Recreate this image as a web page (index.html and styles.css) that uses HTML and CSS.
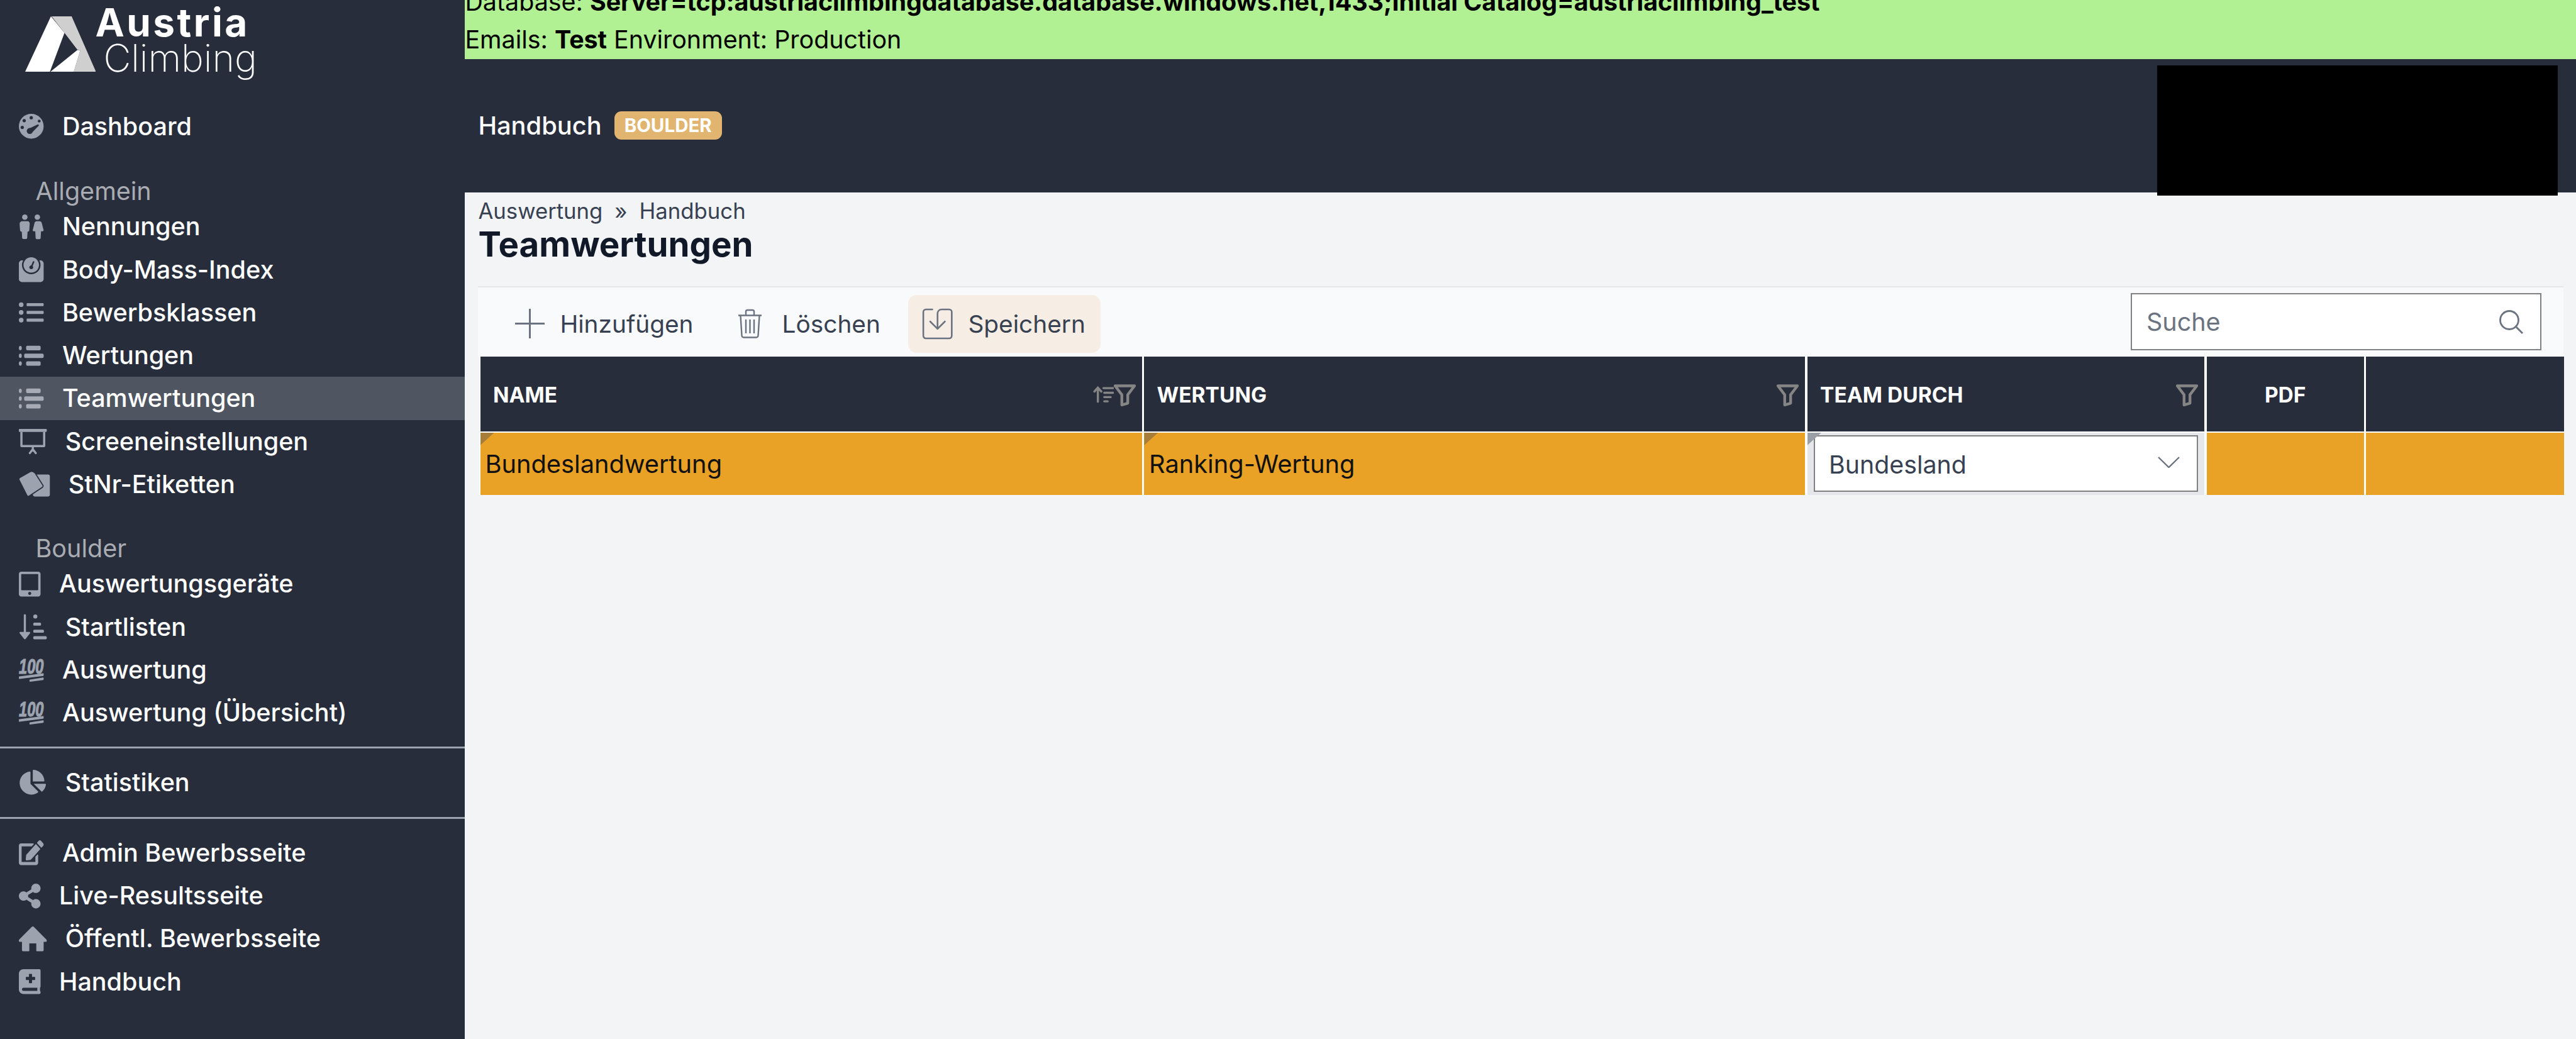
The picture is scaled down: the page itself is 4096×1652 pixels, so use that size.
FILE: index.html
```html
<!DOCTYPE html>
<html lang="de">
<head>
<meta charset="utf-8">
<title>Teamwertungen</title>
<link rel="stylesheet" href="styles.css">
</head>
<body>
<div class="app">
  <aside class="sidebar">
    <div class="logo">
      <svg class="logo-mark" viewBox="0 0 495 387" aria-hidden="true">
        <polygon fill="#cfcfcf" points="185,0 325,0 495,387 340,387 385,240 365,233 275,115"/>
        <polygon fill="#fff" points="0,387 180,0 193,15 275,115 173,387"/>
        <polygon fill="#fff" points="177,387 365,235 385,240 340,387"/>
      </svg>
      <div class="logo-text">
        <span class="logo-top">Austria</span>
        <span class="logo-bottom">Climbing</span>
      </div>
    </div>

    <a class="nav-item"><svg class="nav-icon w512" viewBox="0 0 512 512"><circle cx="256" cy="256" r="256"/><g class="cut"><circle cx="256" cy="80" r="34"/><circle cx="110" cy="140" r="34"/><circle cx="70" cy="280" r="34"/><circle cx="420" cy="150" r="30"/><circle cx="225" cy="355" r="62"/><polygon points="200,310 400,215 415,240 270,390"/></g></svg><span>Dashboard</span></a>

    <div class="nav-heading first">Allgemein</div>
    <a class="nav-item"><svg class="nav-icon w512" viewBox="0 0 512 512"><circle cx="123" cy="55" r="56"/><circle cx="382" cy="55" r="56"/><path d="M70 140h110c30 0 45 25 45 55l-10 130c-2 20-14 30-35 30l-8 130c-1 12-12 22-24 22h-56c-12 0-23-10-24-22l-8-130c-21 0-33-10-35-30L15 195c0-30 25-55 55-55z"/><path d="M335 140h95c22 0 36 14 42 32l38 150c3 14-6 26-22 26h-30l-8 140c-1 12-12 22-24 22h-55c-12 0-23-10-24-22l-8-140h-30c-16 0-25-12-22-26l38-150c6-18 20-32 42-32z"/></svg><span>Nennungen</span></a>
    <a class="nav-item"><svg class="nav-icon w512" viewBox="0 0 512 512"><path d="M448 64h-25.98C438.44 92.28 448 125.01 448 160c0 105.87-86.13 192-192 192S64 265.87 64 160c0-34.99 9.56-67.72 25.98-96H64C28.71 64 0 92.71 0 128v320c0 35.29 28.71 64 64 64h384c35.29 0 64-28.71 64-64V128c0-35.29-28.71-64-64-64zM256 320c88.37 0 160-71.63 160-160S344.37 0 256 0 96 71.63 96 160s71.63 160 160 160zm-.3-151.94l33.58-78.36c3.5-8.17 12.94-11.92 21.03-8.41 8.12 3.48 11.88 12.89 8.41 21l-33.67 78.55C291.73 188 296 197.45 296 208c0 22.09-17.91 40-40 40s-40-17.91-40-40c0-21.98 17.76-39.77 39.7-39.94z"/></svg><span>Body-Mass-Index</span></a>
    <a class="nav-item"><svg class="nav-icon w512" viewBox="0 0 512 512"><path d="M48 48a48 48 0 1 0 48 48 48 48 0 0 0-48-48zm0 160a48 48 0 1 0 48 48 48 48 0 0 0-48-48zm0 160a48 48 0 1 0 48 48 48 48 0 0 0-48-48zm448 16H176a16 16 0 0 0-16 16v32a16 16 0 0 0 16 16h320a16 16 0 0 0 16-16v-32a16 16 0 0 0-16-16zm0-320H176a16 16 0 0 0-16 16v32a16 16 0 0 0 16 16h320a16 16 0 0 0 16-16V80a16 16 0 0 0-16-16zm0 160H176a16 16 0 0 0-16 16v32a16 16 0 0 0 16 16h320a16 16 0 0 0 16-16v-32a16 16 0 0 0-16-16z"/></svg><span>Bewerbsklassen</span></a>
    <a class="nav-item"><svg class="nav-icon w512" viewBox="0 0 512 512"><ellipse cx="30" cy="96" rx="30" ry="44"/><ellipse cx="30" cy="256" rx="30" ry="44"/><ellipse cx="30" cy="416" rx="30" ry="44"/><rect x="150" y="50" width="300" height="92" rx="26"/><rect x="110" y="210" width="402" height="92" rx="26"/><rect x="150" y="370" width="300" height="92" rx="26"/></svg><span>Wertungen</span></a>
    <a class="nav-item active"><svg class="nav-icon w512" viewBox="0 0 512 512"><ellipse cx="30" cy="96" rx="30" ry="44"/><ellipse cx="30" cy="256" rx="30" ry="44"/><ellipse cx="30" cy="416" rx="30" ry="44"/><rect x="150" y="50" width="300" height="92" rx="26"/><rect x="110" y="210" width="402" height="92" rx="26"/><rect x="150" y="370" width="300" height="92" rx="26"/></svg><span>Teamwertungen</span></a>
    <a class="nav-item"><svg class="nav-icon w576" viewBox="0 0 576 512"><rect width="576" height="62" rx="12"/><path fill-rule="evenodd" d="M30 62h516v290c0 14-10 24-24 24H54c-14 0-24-10-24-24zM76 62v268h424V62z"/><path class="stroke-leg" d="M288 376v50M288 420l-62 80M288 420l62 80"/></svg><span>Screeneinstellungen</span></a>
    <a class="nav-item"><svg class="nav-icon w640" viewBox="0 0 640 512"><rect x="290" y="60" width="350" height="452" rx="36"/><path class="card-front" d="M232 0L20 120c-16 10-24 28-18 46L165 490c10 20 30 26 48 14l270-178c16-12 20-30 14-46L360 66c-20-48-80-90-128-66z"/></svg><span>StNr-Etiketten</span></a>

    <div class="nav-heading second">Boulder</div>
    <a class="nav-item"><svg class="nav-icon w448" viewBox="0 0 448 512"><path d="M400 0H48C21.5 0 0 21.5 0 48v416c0 26.5 21.5 48 48 48h352c26.5 0 48-21.5 48-48V48c0-26.5-21.5-48-48-48zM224 480c-17.7 0-32-14.3-32-32s14.3-32 32-32 32 14.3 32 32-14.3 32-32 32zm176-108c0 6.6-5.4 12-12 12H60c-6.6 0-12-5.4-12-12V60c0-6.6 5.4-12 12-12h328c6.6 0 12 5.4 12 12v312z"/></svg><span>Auswertungsgeräte</span></a>
    <a class="nav-item"><svg class="nav-icon w576" viewBox="0 0 576 512"><path d="M102 16a22 22 0 0 1 44 0v344h70c16 0 24 18 13 30L138 506c-8 8-20 8-28 0L18 390c-11-12-3-30 13-30h71z"/><circle cx="340" cy="42" r="42"/><rect x="298" y="168" width="160" height="62" rx="20"/><rect x="298" y="315" width="220" height="62" rx="20"/><rect x="298" y="450" width="278" height="62" rx="20"/></svg><span>Startlisten</span></a>
    <a class="nav-item"><svg class="nav-icon hundred-icon w512" viewBox="0 0 512 512"><text class="hundred" x="0" y="335" textLength="512" lengthAdjust="spacingAndGlyphs">100</text><path d="M12 395l490-65c8 0 10 4 10 10v34c0 6-4 10-10 12L14 450c-8 0-14-4-14-12v-31c0-6 6-12 12-12z"/><path d="M230 462l272-44c6 0 10 4 10 10v30c0 6-4 10-10 12l-272 38c-6 0-10-4-10-10v-26c0-6 4-10 10-10z"/></svg><span>Auswertung</span></a>
    <a class="nav-item"><svg class="nav-icon hundred-icon w512" viewBox="0 0 512 512"><text class="hundred" x="0" y="335" textLength="512" lengthAdjust="spacingAndGlyphs">100</text><path d="M12 395l490-65c8 0 10 4 10 10v34c0 6-4 10-10 12L14 450c-8 0-14-4-14-12v-31c0-6 6-12 12-12z"/><path d="M230 462l272-44c6 0 10 4 10 10v30c0 6-4 10-10 12l-272 38c-6 0-10-4-10-10v-26c0-6 4-10 10-10z"/></svg><span>Auswertung (Übersicht)</span></a>

    <hr class="nav-rule rule-one">
    <a class="nav-item"><svg class="nav-icon w576" viewBox="-16 0 576 512"><path d="M527.79 288H290.5l158.03 158.03c6.04 6.04 15.98 6.53 22.19.68 38.7-36.46 65.32-85.61 73.13-140.86 1.34-9.46-6.51-17.85-16.06-17.85zm-15.83-64.8C503.72 103.74 408.26 8.28 288.8.04 279.68-.59 272 7.1 272 16.24V240h223.77c9.14 0 16.82-7.68 16.19-16.8zM224 288V50.71c0-9.55-8.39-17.4-17.84-16.06C86.99 51.49-4.1 155.6.14 280.37 4.5 408.51 114.83 513.59 243.03 511.98c50.4-.63 96.97-16.87 135.26-44.03 7.9-5.6 8.42-17.23 1.57-24.08L224 288z"/></svg><span>Statistiken</span></a>
    <hr class="nav-rule rule-two">
    <a class="nav-item"><svg class="nav-icon w512" viewBox="0 0 576 512" preserveAspectRatio="none"><path d="M402.6 83.2l90.2 90.2c3.8 3.8 3.8 10 0 13.8L274.4 405.6l-92.8 10.3c-12.4 1.4-22.9-9.1-21.5-21.5l10.3-92.8L388.8 83.2c3.8-3.8 10-3.8 13.8 0zm162-22.9l-48.8-48.8c-15.2-15.2-39.9-15.2-55.2 0l-35.4 35.4c-3.8 3.8-3.8 10 0 13.8l90.2 90.2c3.8 3.8 10 3.8 13.8 0l35.4-35.4c15.2-15.3 15.2-40 0-55.2zM384 346.2V448H64V128h229.8c3.2 0 6.2-1.3 8.5-3.5l40-40c7.6-7.6 2.2-20.5-8.5-20.5H48C21.5 64 0 85.5 0 112v352c0 26.5 21.5 48 48 48h352c26.5 0 48-21.5 48-48V306.2c0-10.7-12.9-16-20.5-8.5l-40 40c-2.2 2.3-3.5 5.3-3.5 8.5z"/></svg><span>Admin Bewerbsseite</span></a>
    <a class="nav-item"><svg class="nav-icon w448" viewBox="0 0 448 512"><path d="M352 320c-22.608 0-43.387 7.819-59.79 20.895l-102.486-64.054a96.551 96.551 0 0 0 0-41.683l102.486-64.054C308.613 184.181 329.392 192 352 192c53.019 0 96-42.981 96-96S405.019 0 352 0s-96 42.981-96 96c0 7.158.79 14.13 2.276 20.841L155.79 180.895C139.387 167.819 118.608 160 96 160c-53.019 0-96 42.981-96 96s42.981 96 96 96c22.608 0 43.387-7.819 59.79-20.895l102.486 64.054A96.301 96.301 0 0 0 256 416c0 53.019 42.981 96 96 96s96-42.981 96-96-42.981-96-96-96z"/></svg><span>Live-Resultsseite</span></a>
    <a class="nav-item"><svg class="nav-icon w576" viewBox="0 0 576 512"><path d="M270 8c10-10 26-10 36 0l262 262c8 10 8 20 8 30 0 12-8 20-20 20h-44v170c0 12-10 22-22 22H370c-6 0-10-4-10-10V350H216v152c0 6-4 10-10 10H86c-12 0-22-10-22-22V320H20c-12 0-20-8-20-20 0-10 0-20 8-30z"/></svg><span>Öffentl. Bewerbsseite</span></a>
    <a class="nav-item"><svg class="nav-icon w448" viewBox="0 0 448 512"><path d="M448 358.4V25.6c0-16-9.6-25.6-25.6-25.6H96C41.6 0 0 41.6 0 96v320c0 54.4 41.6 96 96 96h326.4c12.8 0 25.6-9.6 25.6-25.6v-16c0-6.4-3.2-12.8-9.6-19.2-3.2-16-3.2-60.8 0-73.6 6.4-3.2 9.6-9.6 9.6-19.2zM144 168a8 8 0 0 1 8-8h56v-56a8 8 0 0 1 8-8h48a8 8 0 0 1 8 8v56h56a8 8 0 0 1 8 8v48a8 8 0 0 1-8 8h-56v56a8 8 0 0 1-8 8h-48a8 8 0 0 1-8-8v-56h-56a8 8 0 0 1-8-8zm236.8 280H96c-19.2 0-32-12.8-32-32s16-32 32-32h284.8z"/></svg><span>Handbuch</span></a>
  </aside>

  <main class="main">
    <div class="env-bar">
      <div class="env-line">Database: <b>Server=tcp:austriaclimbingdatabase.database.windows.net,1433;Initial Catalog=austriaclimbing_test</b></div>
      <div class="env-line">Emails: <b>Test</b> Environment: Production</div>
    </div>

    <header class="topbar">
      <span class="topbar-title">Handbuch</span>
      <span class="badge">BOULDER</span>
      <div class="redaction"></div>
    </header>

    <section class="content">
      <div class="breadcrumb"><span>Auswertung</span><span class="crumb-sep">»</span><span>Handbuch</span></div>
      <h1 class="page-title">Teamwertungen</h1>

      <div class="toolbar">
        <button class="tool-btn">
          <svg class="tool-icon" viewBox="0 0 47 47"><path d="M23.5 0v47M0 23.5h47"/></svg>
          <span>Hinzufügen</span>
        </button>
        <button class="tool-btn">
          <svg class="tool-icon trash" viewBox="0 0 41 47"><path d="M2 10.500h37M14 10V4.500c0-1.500 1-2.500 2.500-2.500h8c1.500 0 2.500 1 2.500 2.500V10M5.500 11l2 31.500c.2 2 1.500 3 3 3h20c1.500 0 2.800-1 3-3l2-31.500M14 17v22M20.500 17v22M27 17v22"/></svg>
          <span>Löschen</span>
        </button>
        <button class="tool-btn selected">
          <svg class="tool-icon save" viewBox="0 0 72 73"><path d="M24 3H9C5.500 3 3 5.500 3 9v55c0 3.500 2.500 6 6 6h54c3.500 0 6-2.500 6-6V9c0-3.500-2.500-6-6-6H46c-6 0-10 4-10 10v35M19 31l17 17 17-17"/></svg>
          <span>Speichern</span>
        </button>
        <div class="search">
          <span class="search-text">Suche</span>
          <svg class="search-icon" viewBox="0 0 40 40"><circle cx="17" cy="17" r="14.500"/><path d="M27.500 27.500L38 38"/></svg>
        </div>
      </div>

      <div class="grid">
        <div class="th">
          <span>Name</span>
          <span class="th-icons">
            <svg class="sort-icon" viewBox="0 0 48 42"><path d="M11 38V6M3 14l8-9 8 9"/><path class="sort-lines" d="M24 6h24M26 17h21M26 27h15M26 37h8"/></svg>
            <svg class="filter-icon" viewBox="0 0 52 52"><path d="M3 3H49L33 24V44L19 48V24Z"/></svg>
          </span>
        </div>
        <div class="th">
          <span>Wertung</span>
          <span class="th-icons"><svg class="filter-icon" viewBox="0 0 52 52"><path d="M3 3H49L33 24V44L19 48V24Z"/></svg></span>
        </div>
        <div class="th">
          <span>Team durch</span>
          <span class="th-icons"><svg class="filter-icon" viewBox="0 0 52 52"><path d="M3 3H49L33 24V44L19 48V24Z"/></svg></span>
        </div>
        <div class="th th-center"><span>PDF</span></div>
        <div class="th"></div>

        <div class="td editable">Bundeslandwertung</div>
        <div class="td editable">Ranking-Wertung</div>
        <div class="td td-select editable">
          <div class="select">
            <span>Bundesland</span>
            <svg class="chevron" viewBox="0 0 35 18"><path d="M1 1l16.500 16L34 1"/></svg>
          </div>
        </div>
        <div class="td"></div>
        <div class="td"></div>
      </div>
    </section>
  </main>
</div>
</body>
</html>
```
FILE: styles.css
```css
* { box-sizing: border-box; }

html, body {
  margin: 0;
  height: 100%;
  overflow: hidden;
}

body {
  font-family: Inter, "Liberation Sans", sans-serif;
  background: #f3f4f6;
  color: #111827;
}

.app {
  display: flex;
  width: 4096px;
  height: 1652px;
}

/* Sidebar */
.sidebar {
  flex: 0 0 739.4px;
  display: flex;
  flex-direction: column;
  background: #282d3c;
  color: #fff;
}

.logo {
  display: flex;
  height: 167px;
  flex: none;
}

.logo-mark {
  width: 112.6px;
  height: 88px;
  margin: 26px 0 0 39.8px;
  flex: none;
}

.logo-text {
  display: flex;
  flex-direction: column;
  margin-left: -1px;
  padding-top: 8.4px;
}

.logo-top {
  font-size: 62px;
  font-weight: 700;
  line-height: 56px;
  letter-spacing: 3.5px;
}

.logo-bottom {
  font-size: 60.5px;
  font-weight: 200;
  line-height: 56px;
  margin-left: 13px;
}

.nav-item {
  display: flex;
  align-items: center;
  gap: 29.5px;
  height: 68.27px;
  flex: none;
  padding-left: 30px;
  font-size: 39.5px;
  font-weight: 500;
  color: #fff;
}

.nav-item.active {
  background: #4f5561;
}

.nav-icon {
  height: 39.4px;
  flex: none;
  fill: #9ca3af;
  overflow: visible;
}

.active .nav-icon { fill: #a6abb5; }

.w448 { width: 34.5px; }
.w512 { width: 39.4px; }
.w576 { width: 44.3px; }
.w640 { width: 49.3px; }

.nav-icon .cut { fill: #282d3c; }

.stroke-leg {
  fill: none;
  stroke: #9ca3af;
  stroke-width: 44;
  stroke-linecap: round;
}

.card-front {
  stroke: #282d3c;
  stroke-width: 22;
}

.hundred {
  font-family: "Liberation Sans", sans-serif;
  font-size: 430px;
  font-weight: 700;
  font-style: italic;
  stroke: #9ca3af;
  stroke-width: 14;
}

.nav-heading {
  height: 44px;
  line-height: 44px;
  flex: none;
  padding-left: 56.5px;
  font-size: 39.5px;
  font-weight: 400;
  color: #a9acb2;
}

.nav-heading.first { margin-top: 47px; }
.nav-heading.second { margin-top: 46px; }

.nav-rule {
  flex: none;
  width: 100%;
  height: 2.7px;
  margin: 0;
  border: 0;
  background: #9ca3af;
}

.rule-one { margin-top: 20px; margin-bottom: 19.5px; }
.rule-two { margin-top: 21.5px; margin-bottom: 20px; }

/* Main column */
.main {
  flex: 1 1 0;
  min-width: 0;
  display: flex;
  flex-direction: column;
}

.env-bar {
  flex: 0 0 93.5px;
  display: flex;
  flex-direction: column;
  justify-content: flex-end;
  overflow: hidden;
  padding-left: 0;
  background: #b1f093;
  color: #000;
  font-size: 39.4px;
}

.env-line {
  height: 60.5px;
  line-height: 60.5px;
  white-space: nowrap;
  flex: none;
}

.env-line b {
  font-weight: 700;
  letter-spacing: -0.06px;
}

.topbar {
  position: relative;
  flex: 0 0 212.5px;
  display: flex;
  align-items: center;
  padding-left: 21px;
  background: #282d3c;
  color: #fff;
}

.topbar-title {
  font-size: 39.8px;
  font-weight: 500;
}

.badge {
  display: flex;
  align-items: center;
  height: 45.5px;
  margin-left: 20px;
  padding: 0 16px;
  border-radius: 11px;
  background: #e1b56f;
  color: #fff;
  font-size: 29.5px;
  font-weight: 700;
  margin-top: -1px;
}

.redaction {
  position: absolute;
  top: 10.5px;
  right: 29px;
  width: 637px;
  height: 207px;
  background: #000;
  z-index: 2;
}

.content {
  flex: 1 1 0;
  padding: 9px 20px 0 21px;
}

.breadcrumb {
  display: flex;
  gap: 19px;
  height: 40px;
  line-height: 40px;
  font-size: 34.7px;
  color: #374151;
}

.page-title {
  margin: 5px 0 0;
  height: 56px;
  line-height: 56px;
  font-size: 54.6px;
  font-weight: 700;
  color: #111827;
}

.toolbar {
  display: flex;
  align-items: center;
  height: 112px;
  margin-top: 38.5px;
  padding: 0 35px 0 37px;
  border-top: 2.7px solid #e5e7eb;
  background: #f9fafb;
}

.tool-btn {
  display: flex;
  align-items: center;
  gap: 24px;
  height: 92px;
  margin: 6px 20px 0 0;
  padding: 0 24px 0 22px;
  border: 0;
  border-radius: 14px;
  background: none;
  font: inherit;
  font-size: 38.8px;
  color: #374151;
}

.tool-btn.selected { background: #f6eee4; }

.tool-icon {
  width: 47px;
  height: 47px;
  flex: none;
  fill: none;
  stroke: #6b7280;
  stroke-width: 3;
}

.tool-icon.trash {
  width: 41px;
  margin: 0 7px 0 3px;
  stroke-width: 2.4;
}

.tool-icon.save {
  width: 49.5px;
  height: 50px;
  stroke-width: 3.8;
  stroke-linecap: round;
  stroke-linejoin: round;
}

.search {
  display: flex;
  align-items: center;
  justify-content: space-between;
  width: 653px;
  height: 91px;
  margin-left: auto;
  padding: 0 26px 0 23px;
  border: 2.4px solid #808080;
  background: #fff;
  color: #6b7280;
  font-size: 39.5px;
}

.search-icon {
  width: 40px;
  height: 40px;
  fill: none;
  stroke: #6b7280;
  stroke-width: 2.8;
}

/* Table */
.grid {
  display: grid;
  grid-template-columns: 1052px 1051px 631px 250px 315px;
  grid-template-rows: 119.4px 99.5px;
  column-gap: 3.6px;
  row-gap: 1.8px;
  width: max-content;
  margin-left: 2px;
  padding: 0 0 0 1.5px;
  background: #fff;
}

.th {
  display: flex;
  align-items: center;
  justify-content: space-between;
  padding: 3px 10px 0 20px;
  background: #282d3c;
  color: #fff;
  font-size: 33.5px;
  font-weight: 700;
  text-transform: uppercase;
}

.th-center {
  justify-content: center;
  padding: 3px 0 0;
}

.th-icons {
  display: flex;
  align-items: center;
  margin-top: 2px;
}

.sort-icon {
  width: 33px;
  height: 28.5px;
  fill: none;
  stroke: #858585;
  stroke-width: 5;
  stroke-linecap: round;
  margin-top: -3px;
}

.filter-icon {
  width: 35px;
  height: 36px;
  fill: none;
  stroke: #858585;
  stroke-width: 6.5;
  stroke-linejoin: round;
}

.td {
  position: relative;
  display: flex;
  align-items: center;
  padding-left: 7.5px;
  background: #e9a126;
  color: #111;
  font-size: 39.8px;
}

.td.editable::before {
  content: "";
  position: absolute;
  top: 0;
  left: 0;
  width: 22px;
  height: 20px;
  background: #a67e3a;
  clip-path: polygon(0 0, 100% 0, 0 100%);
}

.td-select {
  padding: 4px 10px 5px;
  background: #e5e7eb;
}

.td-select.editable::before { background: #9a9ea6; }

.select {
  display: flex;
  align-items: center;
  justify-content: space-between;
  width: 100%;
  height: 100%;
  padding: 4px 27px 0 22px;
  border: 2.4px solid #808080;
  background: #fff;
  color: #374151;
  font-size: 39.3px;
}

.chevron {
  width: 35px;
  height: 18px;
  fill: none;
  stroke: #6b7280;
  stroke-width: 2.4;
  margin-top: -8px;
}
```
